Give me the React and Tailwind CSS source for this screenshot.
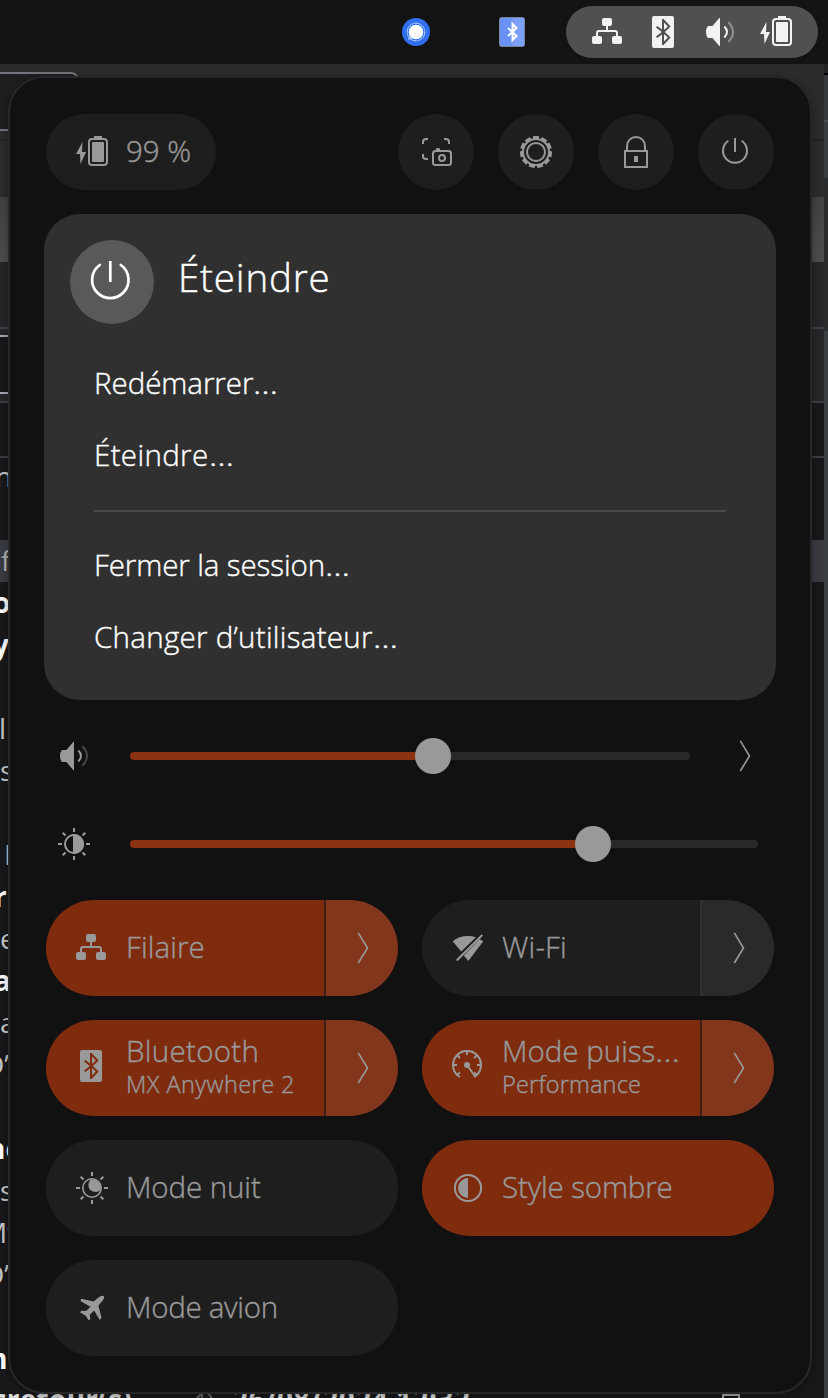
import React from "react";

function Power({ className }) {
  return (
    <svg viewBox="0 0 32 32" className={className} fill="none" stroke="currentColor">
      <path d="M15 2v14" strokeWidth="2" />
      <path d="M7.700 5.300a12 12 0 1 0 14.600 0" strokeWidth="2" strokeLinecap="round" />
    </svg>
  );
}

function Network() {
  return (
    <svg viewBox="0 0 32 32" className="size-8" fill="currentColor">
      <rect x="10" y="2" width="10" height="8" rx="2" />
      <rect x="0" y="20" width="10" height="8" rx="2" />
      <rect x="20" y="20" width="10" height="8" rx="2" />
      <path d="M15 9v6M5 21v-4q0-2 2-2h16q2 0 2 2v4" fill="none" stroke="currentColor" strokeWidth="2" />
    </svg>
  );
}

function Bluetooth() {
  return (
    <svg viewBox="0 0 32 32" className="size-8">
      <path
        fill="currentColor"
        fillRule="evenodd"
        d="M6 0h18a2 2 0 0 1 2 2v28a2 2 0 0 1-2 2H6a2 2 0 0 1-2-2V2a2 2 0 0 1 2-2zM14 3v10.6L9.2 10 8 11.6l5.8 4.4L8 20.4 9.200 22l4.800-3.600V29h1.600l7-7.500L16.900 16l5.700-5.500-7-7.500zM16 6.400l3.900 4.100L16 14zM16 18l3.900 3.500L16 25.600z"
      />
    </svg>
  );
}

function Volume() {
  return (
    <svg viewBox="0 0 32 32" className="size-8" fill="none" stroke="currentColor" strokeWidth="2">
      <path d="M4 10h4.500L15.200 2H16v28h-.800L8.500 22H4q-2-2-2-6t2-6z" fill="currentColor" stroke="none" />
      <path d="M20.300 10.600q2.700 2.400 2.700 5.400t-2.700 5.400" />
      <path d="M24.300 6.200Q29 10.600 29 16t-4.700 9.800" opacity=".4" />
    </svg>
  );
}

function Battery() {
  return (
    <svg viewBox="0 0 32 32" className="size-8" fill="currentColor">
      <path d="M6.500 6 0 18h4L4.500 28 10 16H6z" />
      <rect x="18" y="0" width="8" height="3" />
      <rect x="13" y="3" width="18" height="26" rx="3" fill="none" stroke="currentColor" strokeWidth="2" />
      <rect x="16" y="6" width="12" height="20" rx="1" />
    </svg>
  );
}

function Screenshot() {
  return (
    <svg viewBox="0 0 32 32" className="size-8" fill="none" stroke="currentColor" strokeWidth="2">
      <path d="M3 8V6q0-3 3-3h2M24 3h2q3 0 3 3v2M3 18v2q0 3 3 3h2" />
      <rect x="13" y="15" width="18" height="14" rx="2.500" />
      <circle cx="22" cy="22" r="3" />
      <path d="M16 13.500h4" strokeWidth="2.500" />
    </svg>
  );
}

const teeth = Array.from({ length: 11 }, (_, i) => (i * 360) / 11);

function Gear() {
  return (
    <svg viewBox="0 0 32 32" className="size-8" fill="none" stroke="currentColor" strokeWidth="2">
      <circle cx="16" cy="16" r="13" />
      <circle cx="16" cy="16" r="9" />
      {teeth.map((a) => (
        <path key={a} d="M13 1.500h6" strokeWidth="3" transform={`rotate(${a} 16 16)`} />
      ))}
    </svg>
  );
}

function Lock() {
  return (
    <svg viewBox="0 0 32 32" className="size-8" fill="none" stroke="currentColor" strokeWidth="2">
      <rect x="5" y="15" width="22" height="16" />
      <path d="M7 15v-5a9 9 0 0 1 18 0v5" />
      <rect x="14" y="20" width="4" height="6" fill="currentColor" stroke="none" />
    </svg>
  );
}

const rays = [0, 45, 90, 135, 180, 225, 270, 315];

function Rays() {
  return rays.map((a) => <path key={a} d="M16 0v4" transform={`rotate(${a} 16 16)`} />);
}

function Brightness() {
  return (
    <svg viewBox="0 0 32 32" className="size-8" fill="none" stroke="currentColor" strokeWidth="2">
      <Rays />
      <circle cx="16" cy="16" r="9" />
      <path d="M16 7a9 9 0 0 1 0 18z" fill="currentColor" />
    </svg>
  );
}

function Night() {
  return (
    <svg viewBox="0 0 32 32" className="size-8" fill="none" stroke="currentColor" strokeWidth="2">
      <Rays />
      <circle cx="16" cy="16" r="9.200" strokeWidth="1.600" />
      <path d="M14.500 7.500C11 12 12 18 17 19.500 20.500 20.500 23.500 19.500 25 17A9 9 0 0 0 14.500 7.500z" fill="currentColor" stroke="none" />
    </svg>
  );
}

function WifiOff() {
  return (
    <svg viewBox="0 0 32 32" className="size-8" fill="currentColor">
      <path d="M.700 9.300Q7 4 16 4q4 0 8 1.300L9.200 19.600z" />
      <path d="M27.500 7.200 31.300 9.300 16.300 29 11.800 23.500z" />
      <path d="M30.300 3 4.700 28.500" fill="none" stroke="currentColor" strokeWidth="2" />
    </svg>
  );
}

function Gauge() {
  return (
    <svg viewBox="0 0 32 32" className="size-8" fill="none" stroke="currentColor" strokeWidth="2">
      <path d="M8 27A14 14 0 1 1 22 27" />
      <path d="M15 1v4M1 15h4M25 15h4M5.500 5.500l2.500 2.500M24.500 5.500 22 8M5.500 24.500 8 22.500M24.500 24.500 22 22.500" />
      <path d="m15 15 8.500 12" />
      <circle cx="15" cy="15" r="3" fill="currentColor" stroke="none" />
    </svg>
  );
}

function DarkStyle() {
  return (
    <svg viewBox="0 0 32 32" className="size-8" fill="none" stroke="currentColor" strokeWidth="2">
      <circle cx="16" cy="16" r="13.100" />
      <path d="M16 6v20a10 10 0 0 1 0-20z" fill="currentColor" stroke="none" />
    </svg>
  );
}

function Plane() {
  return (
    <svg viewBox="0 0 32 32" className="size-8" fill="currentColor">
      <path d="M23.500 4.800q3.500-1.800 4.300-.700 1 1-.800 4.200l-4.600 5.200 3.100 12.200-1.700 2.300-5.700-9.400-4.300 4.200.500 4.200-1.500 1.400-3.100-4.600-5.700-3.600 1.400-1.500 4.700.300 4.300-4.200L4.500 8.900l.700-2.200 12.400 2.700z" />
    </svg>
  );
}

function Chevron() {
  return (
    <svg viewBox="0 0 12 32" className="h-8 w-3" fill="none" stroke="currentColor" strokeWidth="1.600">
      <path d="M1.300 .8 10.500 16 1.300 31" />
    </svg>
  );
}

function Wide({ children }) {
  return <span className="inline-block origin-left scale-x-[1.18]">{children}</span>;
}

function Tile({ icon, title, sub, on, menu, track = "", subTrack = "" }) {
  return (
    <div className="flex h-24 overflow-hidden rounded-full">
      <div className={`flex min-w-0 flex-1 items-center pl-[30px] ${on ? "bg-[#7f2b0e]" : "bg-[#1e1e1e]"}`}>
        <div className={sub ? "mb-1" : ""}>{icon}</div>
        <div className="ml-[18px] flex flex-col whitespace-nowrap">
          <span className={`text-[29.500px] leading-[34px] ${sub ? "-mt-[5px]" : "-mt-[3px]"} ${track}`}>{title}</span>
          {sub && <span className={`mt-0.5 text-[23.500px] leading-[28px] ${subTrack}`}>{sub}</span>}
        </div>
      </div>
      {menu && (
        <div
          className={`flex w-[74px] items-center justify-center border-l-2 pl-0.5 ${
            on ? "border-[#3f1e14] bg-[#82361c]" : "border-[#303030] bg-[#2a2a2a]"
          }`}
        >
          <Chevron />
        </div>
      )}
    </div>
  );
}

function Slider({ value, width }) {
  return (
    <div className={`flex h-9 items-center ${width}`}>
      <div className={`h-2 rounded-l-full bg-[#8b3213] ${value}`} />
      <div className="relative -mx-[18px] size-9 shrink-0 rounded-full bg-[#999999]" />
      <div className="h-2 flex-1 rounded-r-full bg-[#292929]" />
    </div>
  );
}

const fragments = [
  ["n", "-ml-[5px] font-normal text-[#c8c8ca]"],
  ["", ""],
  ["f", "ml-[1px] font-normal text-[#b4b4b8]"],
  ["o", "-ml-[7px] font-bold text-white"],
  ["y", "-ml-[7px] font-bold text-white"],
  ["", ""],
  ["l", "-ml-px font-normal text-[#c8c8ca]"],
  ["s", "font-normal text-[#c8c8ca]"],
  ["", ""],
  ["I", "ml-[4px] font-normal text-[#c8c8ca]"],
  ["r", "-ml-[6px] font-bold text-white"],
  ["e", "font-normal text-[#c8c8ca]"],
  ["a", "-ml-[6px] font-bold text-white"],
  ["a", "font-normal text-[#c8c8ca]"],
  ["D’", "-ml-[16px] font-normal text-[#c8c8ca]"],
  ["", ""],
  ["nc", "-ml-[13px] font-bold text-white"],
  ["s", "font-normal text-[#c8c8ca]"],
  ["M’", "-ml-[18px] font-normal text-[#c8c8ca]"],
  ["D’", "-ml-[16px] font-normal text-[#c8c8ca]"],
  ["", ""],
  ["m", "-ml-[20px] font-bold text-white"],
];

function Backdrop() {
  return (
    <div className="flex h-[1334px]">
      <div className="flex w-[824px] flex-col bg-[#18181b]">
        <div className="h-[133px] shrink-0 bg-[#2c2c2c] pt-2">
          <div className="h-[59px] w-[79px] rounded-tr-lg border-y-2 border-r-2 border-[#74747c] bg-[#1e1e21]" />
          <div className="mt-2 h-0.5 bg-[#232323]" />
        </div>
        <div className="h-[65px] shrink-0 bg-linear-to-b from-[#424242] to-[#4e4e4e]" />
        <div className="h-[65px] shrink-0 bg-[#27272a]" />
        <div className="h-0.5 shrink-0 bg-[#3f3f46]" />
        <div className="h-[72px] shrink-0 bg-[#27272a] pt-[6px]">
          <div className="h-[59px] w-10 border-y-2 border-[#a8a8b2] bg-[#18181b]" />
        </div>
        <div className="h-0.5 shrink-0 bg-[#3f3f48]" />
        <div className="h-[53px] shrink-0" />
        <div className="-mb-0.5 h-0.5 shrink-0 bg-[#3c3c41]" />
        {fragments.map(([text, style], i) => (
          <div key={i} className={`h-[42px] shrink-0 text-[28px] leading-[40px] ${i === 2 ? "bg-[#3b3b42]" : ""}`}>
            <div className={`whitespace-nowrap ${style}`}>{text}</div>
          </div>
        ))}
        <div className="flex h-9 shrink-0 items-start text-[28px] leading-[38px] font-bold whitespace-nowrap text-[#dcdcdc]">
          <span className="-ml-[8px] w-[203px] tracking-[.3px]">cretour(s)</span>
          <svg viewBox="0 0 20 24" className="mt-3 mr-[17px] h-6 w-5" fill="none" stroke="#6c6c70" strokeWidth="2">
            <path d="M2 6 7 1v14M12 1q7 4 5 14" />
          </svg>
          <span className="w-[490px] tracking-[.5px]">26/08/2024 12:32</span>
          <span className="mt-[14px] h-6 w-[18px] border-2 border-[#aaaaaa]" />
        </div>
      </div>
      <div className="flex w-1 flex-col bg-[#3c3f42]">
        <div className="h-[9px] bg-[#222222]" />
        <div className="h-[2px] bg-black" />
        <div className="h-[45px] bg-[#35383b]" />
        <div className="h-[2px] bg-[#4a4d50]" />
        <div className="h-[56px] bg-[#383c3f]" />
        <div className="h-[153px] bg-[#2b2c2e]" />
      </div>
    </div>
  );
}

function RoundButton({ children }) {
  return <div className="flex size-[76px] items-center justify-center rounded-full bg-[#1e1e1e]">{children}</div>;
}

export default function App() {
  return (
    <div className="relative h-[1398px] w-[828px] overflow-hidden bg-[#131313] font-['Open_Sans','Noto_Sans',sans-serif] font-light">
      <header className="flex h-16 items-center pl-[400px]">
        <svg viewBox="0 0 32 32" className="size-8">
          <circle cx="16" cy="16" r="14" fill="#2f6ff0" />
          <circle cx="16" cy="16" r="8.800" fill="none" stroke="#ffffff" strokeWidth="1" strokeDasharray="1.500 .8" />
          <circle cx="16" cy="16" r="7.300" fill="#ffffff" />
          <path d="m8 24 1.500-4.500 3 3z" fill="#a9c5fb" />
        </svg>
        <svg viewBox="0 0 26 30" className="ml-[67px] h-[30px] w-[26px]" fill="none">
          <rect x=".7" y=".7" width="24.600" height="28.600" rx="1.500" fill="#6892f6" stroke="#8d99b4" />
          <path d="M13 1h12v28H13z" fill="#7da1f8" />
          <path d="m9 11 8.500 8L13.500 23V7l4 4L9 19" stroke="#ffffff" strokeWidth="2" />
        </svg>
        <div className="ml-[41px] flex h-[52px] w-[252px] items-center gap-6 rounded-full bg-[#505050] pl-[26px] text-[#f2f2f2]">
          <Network />
          <Bluetooth />
          <Volume />
          <Battery />
        </div>
      </header>
      <Backdrop />

      <main className="absolute top-[76px] left-2 h-[1318px] w-[804px] rounded-[36px] border-2 border-[#272727] bg-[#111111] px-[34px] pt-9 text-[#999999] shadow-[0_2px_10px_rgba(0,0,0,0.35)] [-webkit-text-stroke:.4px]">
        <div className="flex items-center gap-6 px-0.5">
          <div className="mr-auto flex h-[76px] w-[170px] items-center rounded-full bg-[#1e1e1e] pl-[30px]">
            <Battery />
            <span className="-mt-px ml-[18px] text-[29.500px] whitespace-nowrap">99 %</span>
          </div>
          <RoundButton><Screenshot /></RoundButton>
          <RoundButton><Gear /></RoundButton>
          <RoundButton><Lock /></RoundButton>
          <RoundButton><Power className="size-8" /></RoundButton>
        </div>

        <section className="mt-6 h-[486px] rounded-[36px] bg-[#303030] px-[50px] pt-[26px] text-[29.500px] leading-[40px] whitespace-nowrap text-white">
          <div className="-ml-6 flex items-center">
            <div className="flex size-[84px] items-center justify-center rounded-full bg-[#595959]">
              <svg viewBox="0 0 84 84" className="size-[84px]" fill="none" stroke="#ffffff" strokeWidth="2.700">
                <path d="M40.300 21v21" />
                <path d="M29.800 25a18.200 18.200 0 1 0 21 0" strokeLinecap="round" />
              </svg>
            </div>
            <h1 className="-mt-[11px] ml-6 text-[38.500px] tracking-[.85px]">Éteindre</h1>
          </div>
          <ul className="mt-[39px] flex flex-col gap-8">
            <li className="-tracking-[.05px]">Redémarrer<Wide>…</Wide></li>
            <li className="tracking-[.35px]">Éteindre<Wide>…</Wide></li>
          </ul>
          <div className="mt-[35px] h-0.5 bg-[#4a4a4a]" />
          <ul className="mt-[33px] flex flex-col gap-8">
            <li className="-tracking-[.1px]">Fermer la session<Wide>…</Wide></li>
            <li className="tracking-[.28px]">Changer d’utilisateur<Wide>…</Wide></li>
          </ul>
        </section>

        <div className="mt-[38px] flex h-9 items-center pl-3.5">
          <Volume />
          <div className="ml-10"><Slider value="w-[303px]" width="w-[560px]" /></div>
          <div className="ml-[49px]"><Chevron /></div>
        </div>
        <div className="mt-[52px] flex h-9 items-center pl-3.5">
          <Brightness />
          <div className="ml-10"><Slider value="w-[463px]" width="w-[628px]" /></div>
        </div>

        <div className="mt-[38px] grid grid-cols-2 gap-6 px-0.5">
          <Tile icon={<Network />} title="Filaire" on menu track="tracking-[.1px]" />
          <Tile icon={<WifiOff />} title="Wi-Fi" menu track="tracking-[.2px]" />
          <Tile icon={<Bluetooth />} title="Bluetooth" sub="MX Anywhere 2" on menu track="tracking-[.3px]" subTrack="tracking-[.45px]" />
          <Tile icon={<Gauge />} title={<>Mode puiss<Wide>…</Wide></>} sub="Performance" on menu subTrack="tracking-[.2px]" />
          <Tile icon={<Night />} title="Mode nuit" track="-tracking-[.1px]" />
          <Tile icon={<DarkStyle />} title="Style sombre" on track="-tracking-[.15px]" />
          <Tile icon={<Plane />} title="Mode avion" track="-tracking-[.3px]" />
        </div>
      </main>
    </div>
  );
}
